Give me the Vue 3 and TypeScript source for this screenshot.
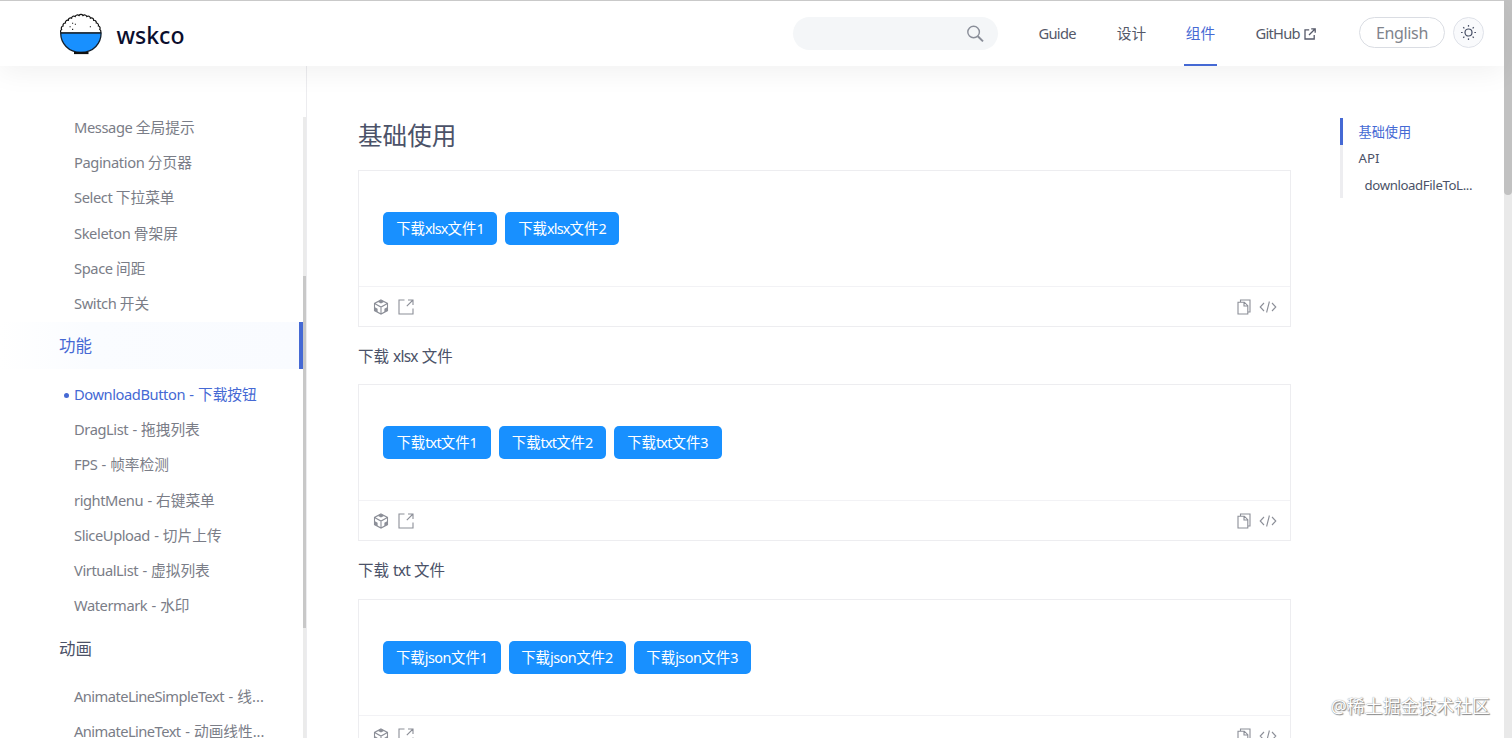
<script setup lang="ts">
interface Entry {
  latin: string
  han: string
  active?: boolean
}
interface Demo {
  kind: string
  count: number
}

const components: Entry[] = [
  { latin: 'Message ', han: '全局提示' },
  { latin: 'Pagination ', han: '分页器' },
  { latin: 'Select ', han: '下拉菜单' },
  { latin: 'Skeleton ', han: '骨架屏' },
  { latin: 'Space ', han: '间距' },
  { latin: 'Switch ', han: '开关' },
]
const features: Entry[] = [
  { latin: 'DownloadButton - ', han: '下载按钮', active: true },
  { latin: 'DragList - ', han: '拖拽列表' },
  { latin: 'FPS - ', han: '帧率检测' },
  { latin: 'rightMenu - ', han: '右键菜单' },
  { latin: 'SliceUpload - ', han: '切片上传' },
  { latin: 'VirtualList - ', han: '虚拟列表' },
  { latin: 'Watermark - ', han: '水印' },
]
const animations: Entry[] = [
  { latin: 'AnimateLineSimpleText - ', han: '线...' },
  { latin: 'AnimateLineText - ', han: '动画线性...' },
]
const groups = [
  { key: 'components', title: '', items: components },
  { key: 'features', title: '功能', items: features, active: true },
  { key: 'animations', title: '动画', items: animations },
]
const demos: Demo[] = [
  { kind: 'xlsx', count: 2 },
  { kind: 'txt', count: 3 },
  { kind: 'json', count: 3 },
]
const rays = [0, 45, 90, 135, 180, 225, 270, 315]
</script>

<template>
  <div class="page">
    <div class="site">
      <header class="header">
        <svg class="logo" viewBox="0 0 44 44">
          <path d="M2.2 21 a2.3 2.3 0 0 1 .4-3.6 a2.3 2.3 0 0 1 1.5-3.4 a2.3 2.3 0 0 1 2.3-3 a2.3 2.3 0 0 1 2.9-2.7 a2.3 2.3 0 0 1 3.3-2.2 a2.3 2.3 0 0 1 3.6-1.6 a2.3 2.3 0 0 1 3.8-.9 a2.3 2.3 0 0 1 4 0 a2.3 2.3 0 0 1 3.8.9 a2.3 2.3 0 0 1 3.6 1.6 a2.3 2.3 0 0 1 3.3 2.2 a2.3 2.3 0 0 1 2.6 2.7 a2.3 2.3 0 0 1 2.1 3 a2.3 2.3 0 0 1 1.4 3.4 a2.3 2.3 0 0 1 .4 3.6 Z" fill="#fff" stroke="#111" stroke-width="1.2" />
          <path d="M1.7 21 H42.1 C42.1 31 34.8 40.4 22 40.4 S1.7 31 1.7 21Z" fill="#1890ff" stroke="#14202c" stroke-width="1.3" />
          <path d="M15 41H29.5" stroke="#111" stroke-width="2.2" />
          <path d="M13 11.2h1.2M10.5 14.8h1.2M15.8 12.2h1.2M13 17.4h1.2M30.8 14.8h1.2" stroke="#222" stroke-width="1.1" />
        </svg>
        <span class="brand">wskco</span>
        <div class="search">
          <svg viewBox="0 0 18 18"><circle cx="7.6" cy="7" r="5.8" /><path d="M11.8 11.2 17 16.4" stroke-width="2" /></svg>
        </div>
        <nav class="nav">
          <a class="guide">Guide</a>
          <a class="design">设计</a>
          <a class="comp on">组件</a>
          <a class="github">GitHub
            <svg viewBox="0 0 12 12"><path d="M5.2 1.8H1V11H10.2V7M7.2.8H11.2V4.8M11 1 5 7" /></svg>
          </a>
        </nav>
        <button class="lang">English</button>
        <button class="theme">
          <svg viewBox="0 0 18 18">
            <circle cx="9" cy="9" r="3.7" />
            <path v-for="r in rays" :key="r" d="M9 1.1V2.8" :transform="`rotate(${r} 9 9)`" />
          </svg>
        </button>
      </header>
      <div class="body">
        <aside class="sidebar">
          <div class="menu">
            <section v-for="g in groups" :key="g.key" :class="g.key">
              <h3 v-if="g.title" class="group" :class="{ on: g.active }">{{ g.title }}</h3>
              <a v-for="e in g.items" :key="e.latin" class="item" :class="{ on: e.active }"><span class="latin">{{ e.latin }}</span><span>{{ e.han }}</span></a>
            </section>
          </div>
          <div class="rail"><div class="thumb"></div></div>
        </aside>
        <main class="content">
          <h2>基础使用</h2>
          <article v-for="d in demos" :key="d.kind" class="demo">
            <div class="card">
              <div class="preview">
                <button v-for="n in d.count" :key="n" class="btn" :class="d.kind">下载<span class="latin">{{ d.kind }}</span>文件{{ n }}</button>
              </div>
              <div class="tools">
                <svg viewBox="0 0 16 16">
                  <path d="M8 .9 14.5 4.4V11.6L8 15.1 1.5 11.6V4.4ZM1.5 4.4 8 8 14.5 4.4M8 8V15" />
                  <path class="solid" d="M8 1 11.4 2.8 8 4.6 4.6 2.8ZM1.5 8 4.6 9.8V13.3L1.5 11.6ZM14.5 8 11.4 9.8V13.3L14.5 11.6Z" />
                </svg>
                <svg class="open" viewBox="0 0 16 16"><path d="M6.5 1H1V15H15V9.5M10 1H15V6M15 1 8.8 7.2" /></svg>
                <span class="fill"></span>
                <svg class="copy" viewBox="0 0 16 16"><path d="M4.5 3V1H14V13H12M2 3.2H8.3L11.8 6.7V15H2ZM8 3.4V7H11.6" /></svg>
                <svg class="code" viewBox="0 0 18 16"><path d="M5 4 1.2 8 5 12M13 4 16.8 8 13 12M10.4 2.5 7.6 13.5" /></svg>
              </div>
            </div>
            <p>下载 <span class="latin">{{ d.kind }}</span> 文件</p>
          </article>
        </main>
        <nav class="toc">
          <a class="on">基础使用</a>
          <a>API</a>
          <a class="sub">downloadFileToL...</a>
        </nav>
      </div>
    </div>
    <div class="scroll"><div class="scroll-thumb"></div></div>
    <div class="mark">@稀土掘金技术社区</div>
  </div>
</template>

<style>
body { margin: 0; overflow: hidden; }
</style>

<style scoped>
.page {
  position: relative;
  display: flex;
  width: 1512px;
  height: 738px;
  overflow: hidden;
  background: #fff;
  color: #4b5268;
  font-family: "Noto Sans", "Noto Sans CJK SC", sans-serif;
  font-size: 14.7px;
  font-weight: 400;
}
* { box-sizing: border-box; }
svg { fill: none; stroke: currentColor; flex: none; }
button { font-family: inherit; }
.site { width: 1504px; height: 738px; display: flex; flex-direction: column; }
.header {
  position: relative;
  z-index: 1;
  flex: none;
  display: flex;
  align-items: center;
  height: 66px;
  padding-left: 59px;
  border-top: 1px solid #c9c9c9;
  background: #fff;
  box-shadow: 0 6px 28px rgba(0, 0, 0, .06);
}
.logo { width: 44px; height: 44px; }
.brand { width: 78px; margin: 2px 0 0 13.5px; color: #0b0e2e; font-size: 23px; line-height: 30px; font-weight: 500; }
.search { display: flex; align-items: center; justify-content: flex-end; width: 205px; height: 33px; margin-left: 598.5px; padding-right: 14px; border-radius: 17px; background: #f4f6f8; color: #8a8e99; }
.search svg { width: 18px; height: 18px; stroke-width: 1.4; }
.nav { display: flex; height: 65px; margin-left: 40.5px; line-height: 65px; white-space: nowrap; color: #555969; }
.nav a { height: 65px; }
.guide { width: 78.3px; letter-spacing: -.7px; }
.design { width: 67px; }
.comp { width: 33px; padding-left: 2px; margin-right: 38.7px; }
.comp.on { border-bottom: 2px solid #4569d4; color: #4569d4; }
.github { display: flex; align-items: center; gap: 4px; width: 61.5px; letter-spacing: -.75px; }
.github svg { width: 12px; height: 12px; stroke-width: 1.3; }
.lang { width: 86px; height: 31px; margin-left: 42px; margin-top: -2px; padding: 0; border: 1px solid #dadde3; border-radius: 16px; background: #fff; color: #80848c; font-size: 16px; line-height: 30px; letter-spacing: -.35px; }
.theme { display: flex; align-items: center; justify-content: center; width: 31px; height: 31px; margin: -2px 0 0 8px; padding: 0; border: 1px solid #dfe2e9; border-radius: 50%; background: #f9fafc; color: #454d64; }
.theme svg { width: 17px; height: 17px; stroke-width: 1.3; }
.body { flex: 1; display: flex; min-height: 0; }
.sidebar { display: flex; width: 307px; flex: none; padding-top: 51px; border-right: 1px solid #ececef; }
.menu { width: 303px; overflow: hidden; }
.components { margin-top: -7.25px; }
.group { height: 46.5px; margin: 1px 0 8px; padding-left: 59px; font-size: 16.5px; line-height: 47.4px; font-weight: 400; }
.group.on { border-right: 4px solid #4569d4; background: linear-gradient(90deg, #fff, #fafcff 30%, #f9fbff); color: #4569d4; line-height: 47px; }
.item { position: relative; display: block; height: 35.25px; padding-left: 74px; line-height: 35px; color: #7a7d87; white-space: pre; }
.latin { letter-spacing: -.4px; }
.features .latin { letter-spacing: -.43px; word-spacing: .9px; }
.animations .latin { letter-spacing: -.55px; word-spacing: 1.3px; }
.item.on { color: #4569d4; }
.item.on::before { content: ""; position: absolute; left: 64px; top: 16px; width: 5px; height: 5px; border-radius: 50%; background: #4569d4; }
.rail { width: 3px; background: #ebebeb; }
.thumb { height: 352px; margin-top: 159px; background: #c8c8c8; }
.content { width: 933px; margin-left: 51px; padding-top: 49px; flex: none; }
h2 { margin: 0; height: 55px; font-size: 24.6px; line-height: 42.4px; font-weight: 400; }
.demo { height: 214.4px; }
.card { height: 157px; border: 1px solid #ededf0; }
.preview { display: flex; gap: 8px; height: 116px; padding: 41px 24.4px 0; border-bottom: 1px solid #f2f2f5; }
.btn { height: 33px; padding: 1px 0 0; border: 0; border-radius: 5px; background: #1890ff; color: #fff; font-size: 14.4px; line-height: 32px; white-space: nowrap; }
.btn .latin { letter-spacing: -.8px; }
.btn.xlsx { width: 114px; }
.btn.txt { width: 107.4px; }
.btn.json { width: 117.2px; }
.btn.json .latin { letter-spacing: -.5px; }
.tools { display: flex; align-items: center; gap: 9px; height: 40px; padding: 0 13px 0 14px; color: #8c8f98; }
.tools svg { width: 16px; height: 16px; stroke-width: 1.1; }
.tools .solid { fill: currentColor; stroke: none; }
.tools .copy { margin-right: -2px; }
.tools .code { width: 18px; }
.fill { flex: 1; }
p { margin: 0; font-size: 15.5px; line-height: 58px; }
p .latin { letter-spacing: -.8px; }
.toc { width: 140px; height: 80px; margin: 52px 0 0 49px; border-left: 3px solid #ededf0; font-size: 13.2px; }
.toc a { display: block; height: 26.6px; margin-left: -3px; padding-left: 18.5px; line-height: 27px; }
.toc .on { border-left: 3px solid #4569d4; padding-left: 15.5px; color: #4569d4; line-height: 28px; }
.toc .sub { padding-left: 24.6px; letter-spacing: -.37px; line-height: 28.5px; }
.scroll { width: 8px; background: #e9e9e9; }
.scroll-thumb { height: 195px; border-radius: 0 0 4px 4px; background: #c1c1c1; }
.mark { position: absolute; right: 22px; bottom: 18px; color: #fff; font-size: 17.9px; line-height: 28px; text-shadow: 0 0 1px #777, 1px 1px 1px #888; white-space: nowrap; }
</style>
